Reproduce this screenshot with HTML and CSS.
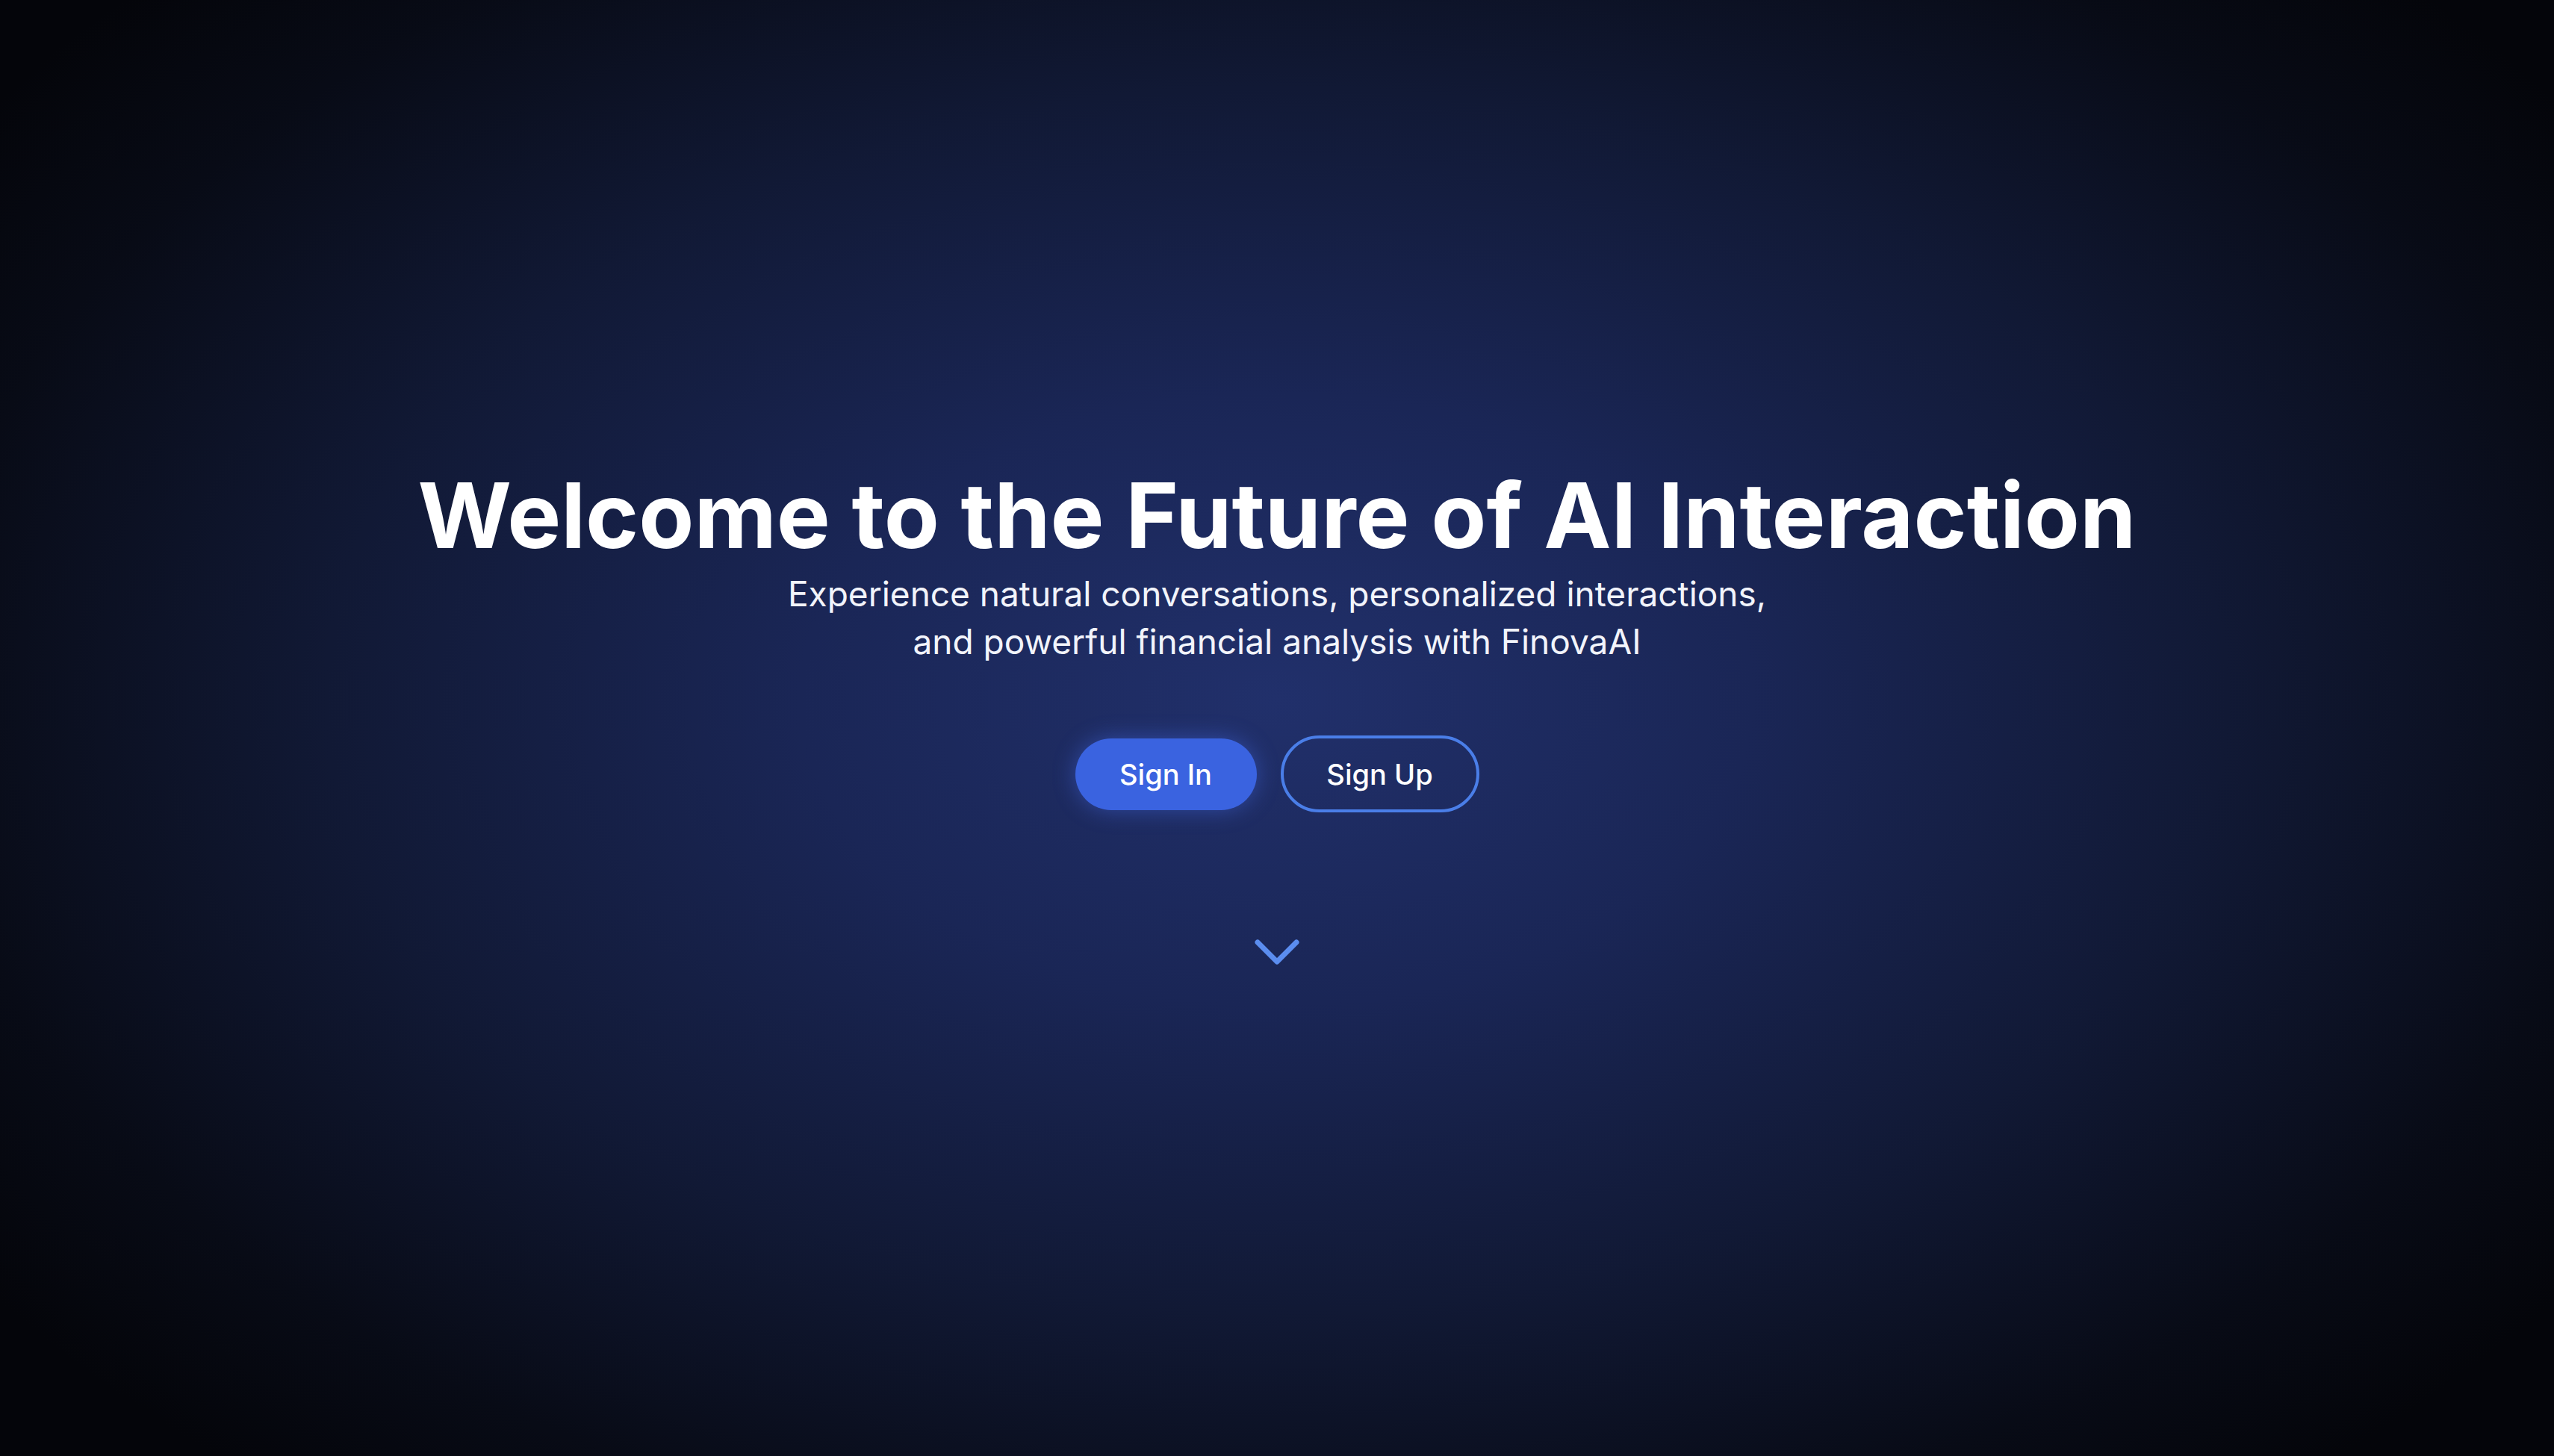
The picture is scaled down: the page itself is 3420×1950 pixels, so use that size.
FILE: index.html
```html
<!DOCTYPE html>
<html lang="en">
<head>
<meta charset="utf-8">
<title>FinovaAI</title>
<link rel="stylesheet" href="styles.css">
</head>
<body>
<main class="hero">
  <section class="hero-content">
    <h1 class="hero-title">Welcome to the Future of AI Interaction</h1>
    <p class="hero-subtitle">Experience natural conversations, personalized interactions,<br>and powerful financial analysis with FinovaAI</p>
    <div class="hero-actions">
      <button class="btn btn-primary">Sign In</button>
      <button class="btn btn-outline">Sign Up</button>
    </div>
    <div class="scroll-hint">
      <svg class="chevron" viewBox="0 0 60 34" width="60" height="34" aria-hidden="true">
        <path d="M4 4 L30 30 L56 4" fill="none" stroke="#5b8def" stroke-width="7" stroke-linecap="round" stroke-linejoin="round"/>
      </svg>
    </div>
  </section>
</main>
</body>
</html>
```

FILE: styles.css
```css
* { box-sizing: border-box; }
html, body { margin: 0; padding: 0; }
body {
  font-family: "Inter", "Liberation Sans", sans-serif;
  color: #ffffff;
  background: #05060a;
}
.hero {
  width: 100%;
  height: 100vh;
  display: flex;
  align-items: center;
  justify-content: center;
  background:
    radial-gradient(ellipse 62% 70% at 50% 48%, #21306b 0%, #1a2656 30%, #111935 60%, #080b16 85%, #04050a 100%);
}
.hero-content {
  display: flex;
  flex-direction: column;
  align-items: center;
  text-align: center;
  padding-bottom: 34px;
}
.hero-title {
  margin: 0;
  font-size: 121px;
  line-height: 1.1;
  font-weight: 700;
  letter-spacing: 0;
}
.hero-subtitle {
  margin: 6px 0 0;
  font-size: 46px;
  line-height: 64px;
  font-weight: 400;
  color: #f2f4fb;
}
.hero-actions {
  display: flex;
  gap: 32px;
  align-items: center;
  margin-top: 94px;
}
.btn {
  font-family: inherit;
  font-size: 38px;
  font-weight: 500;
  color: #ffffff;
  border-radius: 999px;
  cursor: pointer;
}
.btn-primary {
  width: 243px;
  height: 96px;
  background: #3a63e0;
  border: none;
  box-shadow: 0 0 30px rgba(70, 110, 240, 0.45);
}
.btn-outline {
  width: 266px;
  height: 103px;
  background: transparent;
  border: 4px solid #4a7ee8;
}
.scroll-hint {
  margin-top: 170px;
  display: flex;
  justify-content: center;
}
.chevron { display: block; }
```
